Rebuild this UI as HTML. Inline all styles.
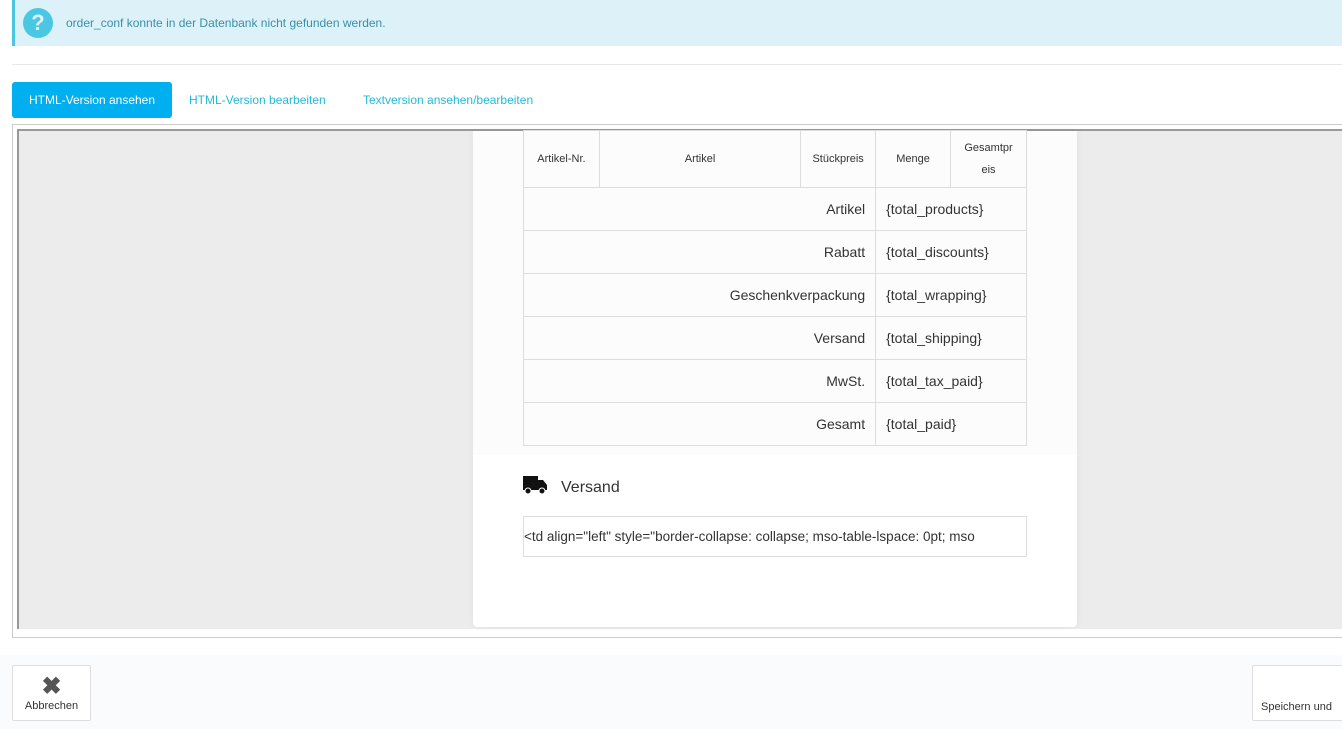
<!DOCTYPE html>
<html><head><meta charset="utf-8"><style>
*{box-sizing:border-box;margin:0;padding:0}
body{width:1342px;height:729px;overflow:hidden;background:#fff;font-family:"Liberation Sans",sans-serif;position:relative}
.a{position:absolute}
.alert{left:12px;top:0;width:1330px;height:46px;background:#dcf2f8;border-left:3px solid #4ac7e3}
.alert .ic{left:8px;top:8px;width:30px;height:30px;border-radius:50%;background:#4ac7e3;color:#dcf2f8;font-weight:bold;font-size:22px;text-align:center;line-height:30px}
.alert .t{left:51px;top:16px;font-size:12px;color:#3d8ea8}
.tab{top:82px;height:36px;line-height:37px;font-size:12px;color:#25b9d7}
.frame{left:12px;top:124px;width:1340px;height:514px;border:1px solid #ccc;border-right:none}
.inner{left:17px;top:129px;width:1330px;height:500px;background:#ececec;border-top:2px solid #999;border-left:2px solid #999;overflow:hidden}
.card{left:473px;top:131px;width:604px;height:496px;background:#fff;border-radius:0 0 4px 4px;box-shadow:0 0 8px rgba(0,0,0,.05)}
.card .top{left:0;top:0;width:604px;height:324px;background:#fcfcfc}
table{position:absolute;left:523px;top:130px;width:504px;border-collapse:collapse;font-size:14px;color:#333}
td{border:1px solid #ddd;height:43px;padding:0 10px}
.h td{height:57px;font-size:11px;text-align:center;padding:0 4px;line-height:22px}
.r{text-align:right}
.btn{background:#fff;border:1px solid #ddd;border-radius:2px;font-size:11px;color:#333;text-align:center}
</style></head><body>
<div class="a alert"><div class="a ic">?</div><div class="a t">order_conf konnte in der Datenbank nicht gefunden werden.</div></div>
<div class="a" style="left:12px;top:64px;width:1330px;height:1px;background:#e8e8e8"></div>
<div class="a tab" style="left:12px;width:160px;background:#00aff0;color:#fff;border-radius:3px;text-align:center">HTML-Version ansehen</div>
<div class="a tab" style="left:189px">HTML-Version bearbeiten</div>
<div class="a tab" style="left:363px">Textversion ansehen/bearbeiten</div>
<div class="a frame"></div>
<div class="a inner"></div>
<div class="a card"><div class="a top"></div></div>
<table>
<tr class="h"><td style="width:76px">Artikel-Nr.</td><td style="width:202px">Artikel</td><td style="width:75px">Stückpreis</td><td style="width:75px">Menge</td><td style="width:76px">Gesamtpr<br>eis</td></tr>
<tr><td colspan="3" class="r">Artikel</td><td colspan="2">{total_products}</td></tr>
<tr><td colspan="3" class="r">Rabatt</td><td colspan="2">{total_discounts}</td></tr>
<tr><td colspan="3" class="r">Geschenkverpackung</td><td colspan="2">{total_wrapping}</td></tr>
<tr><td colspan="3" class="r">Versand</td><td colspan="2">{total_shipping}</td></tr>
<tr><td colspan="3" class="r">MwSt.</td><td colspan="2">{total_tax_paid}</td></tr>
<tr><td colspan="3" class="r">Gesamt</td><td colspan="2">{total_paid}</td></tr>
</table>
<svg class="a" style="left:523px;top:476px" width="24" height="19" viewBox="0 0 24 19"><rect x="0" y="0" width="15" height="14" fill="#111"/><path d="M15 4h5l4 5v5h-9z" fill="#111"/><circle cx="5" cy="15" r="3" fill="#111" stroke="#fff" stroke-width="1"/><circle cx="19" cy="15" r="3" fill="#111" stroke="#fff" stroke-width="1"/></svg>
<div class="a" style="left:561px;top:479px;font-size:16px;color:#333">Versand</div>
<div class="a" style="left:523px;top:516px;width:504px;height:41px;border:1px solid #ddd;font-size:13.5px;line-height:40px;color:#333;white-space:nowrap;overflow:hidden">&lt;td align="left" style="border-collapse: collapse; mso-table-lspace: 0pt; mso</div>
<div class="a" style="left:0;top:655px;width:1342px;height:74px;background:#fafbfc"></div>
<div class="a btn" style="left:12px;top:665px;width:79px;height:56px"><div style="font-size:24px;font-weight:bold;color:#555;line-height:26px;margin-top:8px">✖</div><div>Abbrechen</div></div>
<div class="a btn" style="left:1252px;top:665px;width:100px;height:56px;text-align:left;padding-left:8px"><div style="margin-top:35px;white-space:nowrap">Speichern und</div></div>
</body></html>
